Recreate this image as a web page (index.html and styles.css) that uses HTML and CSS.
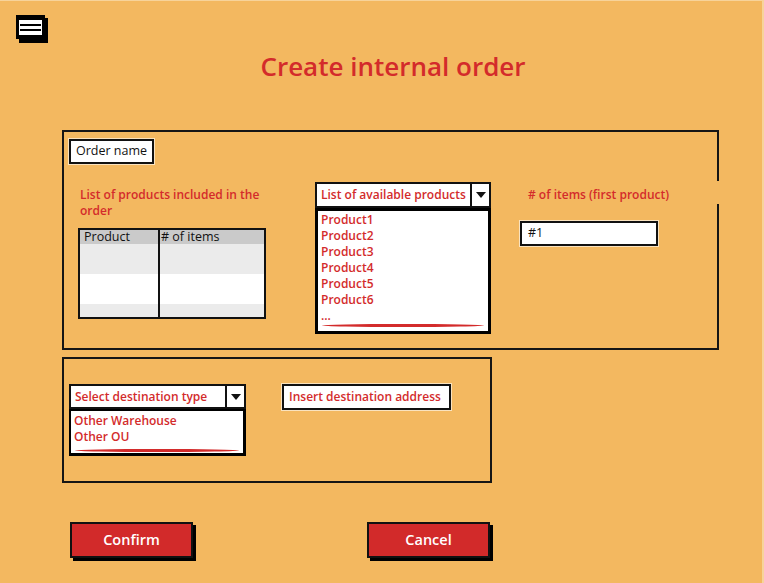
FILE: index.html
```html
<!DOCTYPE html>
<html>
<head>
<meta charset="utf-8">
<link rel="stylesheet" href="styles.css">
</head>
<body>
<div class="page">
  <div class="topbar">
    <svg class="menu-icon" width="34" height="30" viewBox="0 0 34 30">
      <rect x="3" y="3" width="29" height="25" fill="#000"/>
      <rect x="0" y="0" width="29" height="24" fill="#000"/>
      <rect x="3" y="5" width="23" height="15" fill="#fff"/>
      <rect x="4" y="9" width="21" height="2" fill="#000"/>
      <rect x="4" y="14" width="21" height="2" fill="#000"/>
    </svg>
  </div>
  <h1 class="title">Create internal order</h1>

  <section class="panel panel-order">
    <div class="box order-name">Order name</div>
    <div class="columns">
      <div class="col col-left">
        <div class="label">List of products included in the order</div>
        <div class="table">
          <div class="trow thead"><div class="c1">Product</div><div class="c2"># of items</div></div>
          <div class="trow tr-gray"><div class="c1"></div><div class="c2"></div></div>
          <div class="trow tr-white"><div class="c1"></div><div class="c2"></div></div>
          <div class="trow tr-gray tr-last"><div class="c1"></div><div class="c2"></div></div>
        </div>
      </div>
      <div class="col col-mid">
        <div class="dropdown">
          <span class="dd-text">List of available products</span>
          <span class="dd-arrow"></span>
        </div>
        <div class="listbox list-products">
          <div>Product1</div>
          <div>Product2</div>
          <div>Product3</div>
          <div>Product4</div>
          <div>Product5</div>
          <div>Product6</div>
          <div>...</div>
          <div class="swoosh"></div>
        </div>
      </div>
      <div class="col col-right">
        <div class="label label-items"># of items (first product)</div>
        <div class="box input-items">#1</div>
      </div>
    </div>
  </section>

  <section class="panel panel-dest">
    <div class="dest-row">
      <div class="dest-col">
        <div class="dropdown dd-dest">
          <span class="dd-text">Select destination type</span>
          <span class="dd-arrow"></span>
        </div>
        <div class="listbox list-dest">
          <div>Other Warehouse</div>
          <div>Other OU</div>
          <div class="swoosh"></div>
        </div>
      </div>
      <div class="box red-text address">Insert destination address</div>
    </div>
  </section>

  <div class="actions">
    <button class="btn">Confirm</button>
    <button class="btn btn-cancel">Cancel</button>
  </div>
</div>
</body>
</html>
```

FILE: styles.css
```css
* { box-sizing: border-box; }
html, body { margin: 0; padding: 0; }
body {
  background: #f3b860;
  font-family: "Open Sans", Lato, sans-serif;
  color: #111;
}
.page {
  width: 764px;
  height: 583px;
  overflow: hidden;
  border-right: 2px solid #f7d39a;
  border-top: 1px solid #f7d39a;
}
.topbar {
  height: 42px;
  padding: 14px 0 0 16px;
}
.menu-icon { display: block; }
.title {
  margin: 7px 0 0 0;
  padding-left: 24px;
  text-align: center;
  font-size: 26px;
  line-height: 32px;
  font-weight: 600;
  color: #d32b2b;
}
.panel {
  position: relative;
  border: 2px solid #151515;
  margin-left: 62px;
}
.panel-order {
  margin-top: 48px;
  width: 657px;
  height: 220px;
  padding: 7px 0 0 5px;
}
.panel-order::after {
  content: "";
  position: absolute;
  right: -3px;
  top: 49px;
  width: 4px;
  height: 23px;
  background: #f3b860;
}
.box {
  background: #fff;
  border: 2px solid #111;
  box-shadow: 0 0 0 1px rgba(255,255,255,0.6);
  font-size: 12.5px;
  line-height: 20px;
  padding: 0 5px;
  white-space: nowrap;
}
.order-name {
  width: 85px;
  height: 25px;
  padding-left: 5px;
}
.columns {
  display: flex;
  margin-top: 18px;
  padding-left: 9px;
}
.col-left { width: 187px; }
.col-mid { width: 176px; margin-left: 50px; }
.col-right { width: 138px; margin-left: 29px; }
.label {
  margin-top: 5px;
  padding-left: 2px;
  font-size: 12px;
  line-height: 16px;
  color: #d32b2b;
  font-weight: 600;
}
.table {
  margin-top: 9px;
  width: 188px;
  height: 91px;
  border: 2px solid #111;
  display: flex;
  flex-direction: column;
  background: #fff;
}
.trow { display: flex; }
.trow .c1 { width: 80px; border-right: 2px solid #111; padding-left: 4px; }
.trow .c2 { flex: 1; padding-left: 1px; }
.thead { height: 14px; background: #cacaca; font-size: 12.5px; line-height: 14px; }
.tr-gray { height: 30px; background: #ebebeb; }
.tr-white { height: 30px; background: #fff; }
.tr-last { flex: 1; }
.dropdown {
  display: flex;
  height: 26px;
  background: #fff;
  border: 2px solid #111;
  color: #d32b2b;
  font-size: 12px;
  font-weight: 600;
}
.dd-text {
  flex: 1;
  padding-left: 4px;
  line-height: 21px;
  border-right: 2px solid #111;
  white-space: nowrap;
  overflow: hidden;
}
.dd-arrow {
  width: 17px;
  position: relative;
}
.dd-arrow::before {
  content: "";
  position: absolute;
  left: 4px;
  top: 8px;
  border-left: 5px solid transparent;
  border-right: 5px solid transparent;
  border-top: 6px solid #111;
}
.listbox {
  background: #fff;
  border: 3px solid #000;
  color: #d32b2b;
  font-size: 12px;
  font-weight: 600;
  line-height: 16px;
  padding: 1px 3px 0 3px;
}
.list-products { height: 126px; }
.swoosh {
  height: 3px;
  margin: 3px 1px 0 1px;
  background: #d32b2b;
  border-radius: 50%;
}
.list-products .swoosh { margin-top: 0; }
.label-items { padding-left: 8px; white-space: nowrap; }
.input-items {
  margin-top: 18px;
  height: 25px;
  width: 138px;
  padding-left: 6px;
}
.panel-dest {
  margin-top: 7px;
  width: 430px;
  height: 126px;
  padding: 25px 0 0 5px;
}
.dest-row { display: flex; }
.dest-col { width: 177px; }
.dd-dest { height: 25px; }
.list-dest {
  height: 47px;
  padding-top: 2px;
  border-width: 2px 3px 3px 2px;
}
.list-dest .swoosh { margin-top: 4px; }
.red-text { color: #d32b2b; font-weight: 600; }
.address {
  margin-left: 36px;
  width: 169px;
  height: 26px;
  font-size: 12px;
  line-height: 21px;
  padding-left: 5px;
}
.actions {
  display: flex;
  margin-top: 39px;
  padding-left: 70px;
}
.btn {
  width: 123px;
  height: 36px;
  background: #d22a2a;
  border: 2px solid #111;
  box-shadow: 3px 3px 0 #000;
  color: #fff;
  font-family: "Open Sans", Lato, sans-serif;
  font-size: 14.5px;
  font-weight: 600;
  padding: 0 0 2px 0;
}
.btn-cancel { margin-left: 174px; }
```
